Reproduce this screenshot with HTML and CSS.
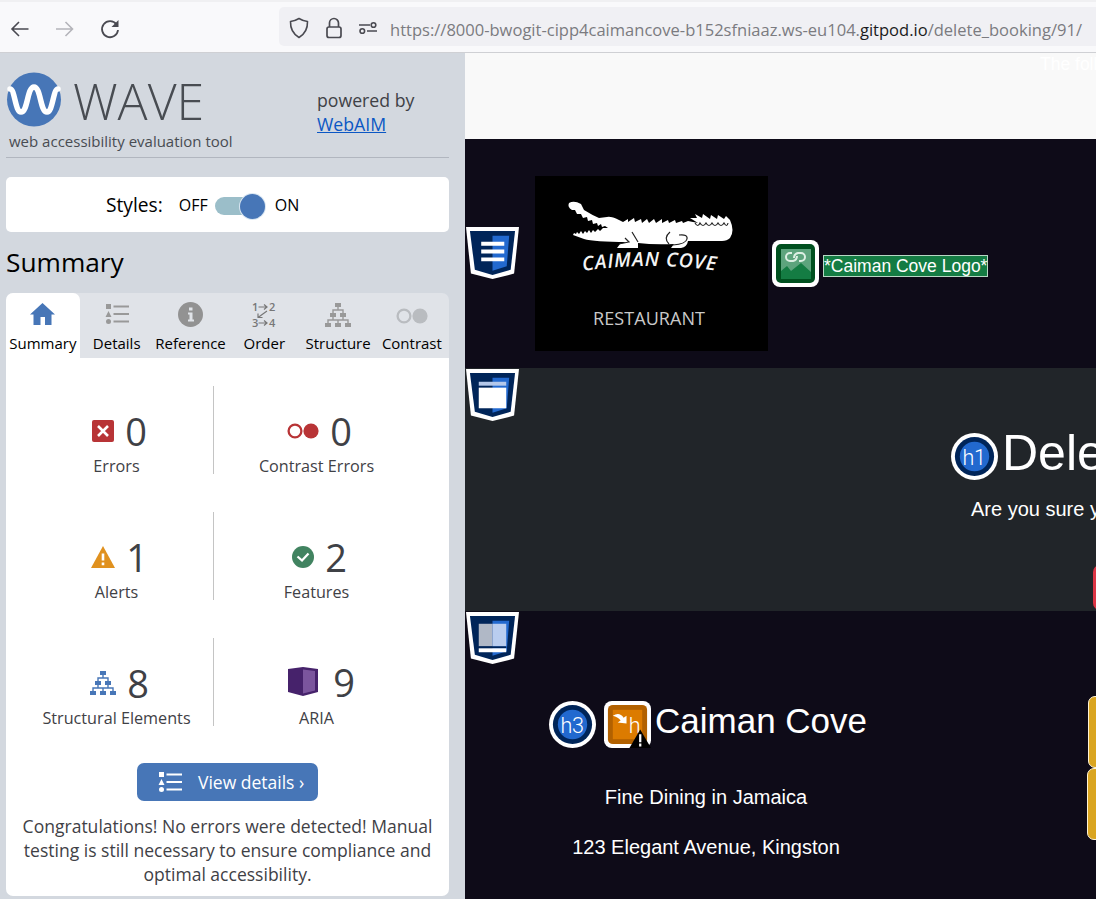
FILE: index.html
```html
<!DOCTYPE html>
<html lang="en">
<head>
<meta charset="utf-8">
<title>WAVE report - Caiman Cove</title>
<link rel="stylesheet" href="styles.css">
</head>
<body>
<svg width="0" height="0" class="defs">
  <symbol id="tree" viewBox="0 0 26 24">
    <path d="M10 0h6v4h-6zM5 10h6v4H5zM15 10h6v4h-6zM0 20h6v4H0zM10 20h6v4h-6zM20 20h6v4h-6z" fill="currentColor"/>
    <path d="M13 4v3M8 10V7h10v3M8 14v3M18 14v3M3 20v-3h20v3M13 17v3" fill="none" stroke="currentColor" stroke-width="1.4"/>
  </symbol>
  <symbol id="list" viewBox="0 0 24 20">
    <path d="M1 0h5v5H1zM3.500 7l3 6h-6z" fill="currentColor"/><circle cx="3.500" cy="17.500" r="2.500" fill="currentColor"/>
    <path d="M8.500 2.500H24M8.500 10H24M8.500 17.500H24" stroke="currentColor" stroke-width="2.200"/>
  </symbol>
  <symbol id="pair" viewBox="0 0 32 16">
    <circle cx="8" cy="8" r="6.400" fill="none" stroke="currentColor" stroke-width="2.300"/><circle cx="24" cy="8" r="7.600" fill="currentColor"/>
  </symbol>
  <symbol id="badge" viewBox="0 0 54 54">
    <path d="M0 0H54L49 47.500L27 53L5 47.500Z" fill="#fff"/><path d="M4 4H50L45.500 43.500L27 49L9 43.500Z" fill="#002559"/><path d="M27 9H44L41.500 40L27 44.500Z" fill="#2269cf"/>
  </symbol>
</svg>

<header class="toolbar">
  <nav class="nav">
    <svg width="20" height="18" viewBox="0 0 20 18" fill="none" stroke="#4a4a51" stroke-width="1.600"><path d="M18.500 9H2M9 2L2 9l7 7"/></svg>
    <svg width="20" height="18" viewBox="0 0 20 18" fill="none" stroke="#b4b4ba" stroke-width="1.600"><path d="M1 9h16.500M10.500 2l7 7-7 7"/></svg>
    <svg width="20" height="20" viewBox="0 0 20 20" fill="none" stroke="#4a4a51" stroke-width="1.800"><path d="M16.500 5.500A8 8 0 1 0 18 11"/><path d="M18.500 1v7h-7z" fill="#4a4a51" stroke="none"/></svg>
  </nav>
  <div class="address">
    <svg width="20" height="22" viewBox="0 0 20 22" fill="none" stroke="#4a4a51" stroke-width="1.600" stroke-linejoin="round"><path d="M10 1.500C7 3.300 4.200 4.200 1.500 4.500 1.300 11 3.200 16.500 10 20.500 16.800 16.500 18.700 11 18.500 4.500 15.800 4.200 13 3.300 10 1.500Z"/></svg>
    <svg width="16" height="22" viewBox="0 0 16 22" fill="none" stroke="#4a4a51" stroke-width="1.700"><rect x="1" y="10" width="14" height="10.500" rx="2"/><path d="M3.500 10V6a4.500 4.500 0 0 1 9 0v4"/></svg>
    <svg width="18" height="14" viewBox="0 0 18 14" fill="none" stroke="#4a4a51" stroke-width="1.600"><path d="M0 4h11M8 10h10"/><circle cx="14.500" cy="4" r="2.300"/><circle cx="3.300" cy="10" r="2.300"/></svg>
    <span class="url">https://8000-bwogit-cipp4caimancove-b152sfniaaz.ws-eu104.<b>gitpod.io</b>/delete_booking/91/</span>
  </div>
</header>

<main class="main">
  <aside class="sidebar">
    <div class="brand">
      <div class="brand-left">
        <div class="brand-row">
          <svg width="54" height="55" viewBox="0 0 54 55"><circle cx="27" cy="27.500" r="27" fill="#4776b7"/><path d="M3 17C8 17 8 40 14 40C21 40 20 15 27 15C34 15 33 40 40 40C46 40 46 17 51 17" fill="none" stroke="#fff" stroke-width="5.500" stroke-linecap="round"/></svg>
          <span class="wordmark">WAVE</span>
        </div>
        <div class="tagline">web accessibility evaluation tool</div>
      </div>
      <div class="powered">powered by<br><a href="#">WebAIM</a></div>
    </div>
    <div class="styles-box">
      <span class="styles-label">Styles:</span><span class="off">OFF</span><span class="switch"><i></i></span><span class="on">ON</span>
    </div>
    <h2>Summary</h2>
    <div class="tabs">
      <div class="tab active"><span class="ti"><svg width="25" height="22" viewBox="0 0 25 22"><path d="M12.500 0L25 11.500H21.500V22H15V14H10.500V22H3.500V11.500H0Z" fill="#4776b7"/></svg></span><span>Summary</span></div>
      <div class="tab"><span class="ti"><svg width="24" height="20"><use href="#list"/></svg></span><span>Details</span></div>
      <div class="tab"><span class="ti"><svg width="25" height="25" viewBox="0 0 25 25"><circle cx="12.500" cy="12.500" r="12.500" fill="#929292"/><path d="M11 5.500h3.500v3H11zM10 10.500h4.500v7H16v2h-6v-2h1.500v-5H10z" fill="#e0e3e8"/></svg></span><span>Reference</span></div>
      <div class="tab"><span class="ti order"><svg width="24" height="26" viewBox="0 0 24 26"><g fill="#777" class="order-num"><text x="0" y="9">1</text><text x="17" y="9">2</text><text x="0" y="25">3</text><text x="17" y="25">4</text></g><path d="M6.500 5h8M12 2.500l3 2.500L12 7.500M6.500 21h8M12 18.500l3 2.500-3 2.500M15 9L6 15.500M6 11.500v4h4.500" fill="none" stroke="#777" stroke-width="1.200"/></svg></span><span>Order</span></div>
      <div class="tab"><span class="ti"><svg width="26" height="24"><use href="#tree"/></svg></span><span>Structure</span></div>
      <div class="tab"><span class="ti pale"><svg width="32" height="16"><use href="#pair"/></svg></span><span>Contrast</span></div>
    </div>
    <section class="panel">
      <div class="stats">
        <div class="stat"><div class="count"><svg width="22" height="22" viewBox="0 0 22 22"><rect width="22" height="22" rx="2" fill="#b83436"/><path d="M6 6l10 10M16 6L6 16" stroke="#fff" stroke-width="2.600"/></svg><b>0</b></div><p>Errors</p></div>
        <div class="stat"><div class="count red"><svg width="32" height="16"><use href="#pair"/></svg><b>0</b></div><p>Contrast Errors</p></div>
        <div class="stat"><div class="count"><svg width="24" height="22" viewBox="0 0 24 22"><path d="M12 0l12 22H0z" fill="#e0911f"/><path d="M12 7.500v7M12 16.500v2.800" stroke="#fff" stroke-width="2.600"/></svg><b>1</b></div><p>Alerts</p></div>
        <div class="stat"><div class="count"><svg width="22" height="22" viewBox="0 0 22 22"><circle cx="11" cy="11" r="11" fill="#418360"/><path d="M5.500 10.500l4.500 4 6.500-7" fill="none" stroke="#fff" stroke-width="2.300"/></svg><b>2</b></div><p>Features</p></div>
        <div class="stat"><div class="count blue"><svg width="26" height="24"><use href="#tree"/></svg><b>8</b></div><p>Structural Elements</p></div>
        <div class="stat"><div class="count aria"><svg width="30" height="29" viewBox="0 0 30 29"><path d="M0 2L15 0L30 2V25L15 29L0 25Z" fill="#46226b"/><path d="M15 2.500L27 4V23.500L15 26.500Z" fill="#7b559d"/></svg><b>9</b></div><p>ARIA</p></div>
      </div>
      <button class="details"><svg width="24" height="20"><use href="#list"/></svg>View details ›</button>
      <p class="congrats"><span>Congratulations! No errors were detected! Manual</span><br><span>testing is still necessary to ensure compliance and</span><br><span>optimal accessibility.</span></p>
    </section>
  </aside>

  <div class="page">
    <div class="notice">The foll</div>
    <div class="site-head">
      <svg class="landmark" width="53" height="53" viewBox="0 0 54 54"><use href="#badge"/><path d="M15.500 15H39v4H15.500zM15.500 23H39v4H15.500zM15.500 31H39v4H15.500z" fill="#fff"/></svg>
      <svg class="logo" width="233" height="175" viewBox="0 0 233 175">
        <rect width="233" height="175" fill="#000"/>
        <path d="M34 27Q39 24 46 28L49 34Q57 39 64 42L72 41Q76 40 84 44L88 46 93 43 93 46 99 42 100 46 106 43 107 47 112 43 114 47 119 43 121 47 127 43 127 47 133 44 134 47 140 44 141 47 147 45 148 47 153 45 163 47 155 42 162 42 160 38 167 42 168 38 175 43 176 39 182 43 183 39 189 43 191 40 195 44Q200 55 195 62 192 65 187 65H153Q152 71 146 72H136L139 68Q119 69 103 67L103 72H82L85 68 92 66Q59 66 49 63L38 59 39 57 41 58 42 56 44 58 46 55 48 58 50 55 52 57 54 54 56 57 58 54 60 56 63 53 65 55 68 52 73 52 70 50 67 51 66 48 63 50 62 47 58 48 57 44 53 45 52 41 48 42 46 38 42 38 40 34 37 34Q32 31 34 27Z" fill="#fff"/>
        <path d="M97 56L103 66M90 62L94 66 84 68M135 56Q128 62 134 68M144 59Q153 58 152 63T138 69M160 47q3 5 5 0 3 5 6 0 3 5 6 0 3 5 6 0 3 5 6 0 3 5 4 0" fill="none" stroke="#222" stroke-width="1.200"/>
        <path id="arc" d="M48 95Q115 85 184 95" fill="none"/>
        <text class="logo-name" fill="#f4f4f4"><textPath href="#arc" textLength="133">CAIMAN COVE</textPath></text>
        <text class="logo-sub" x="58" y="149" textLength="112" fill="#c9c9c9">RESTAURANT</text>
      </svg>
      <svg class="alt-icon" width="47" height="47" viewBox="0 0 47 47"><rect width="47" height="47" rx="8" fill="#fff"/><rect x="4" y="4" width="39" height="39" rx="5" fill="#00501f"/><rect x="9" y="9" width="30" height="30" fill="#5da47d"/><path d="M9 31l6-5 4 5 10-8 10 9v7H9z" fill="#147c43"/><g fill="none" stroke="#dcefe3" stroke-width="2"><path d="M20 13h-2a4 4 0 0 0 0 8h3q4-1 4-5M27 21h2a4 4 0 0 0 0-8h-3q-4 1-4 5"/></g></svg>
      <span class="alt-text">*Caiman Cove Logo*</span>
    </div>
    <div class="confirm">
      <svg class="landmark" width="53" height="53" viewBox="0 0 54 54"><use href="#badge"/><path d="M13 13H41v4H13z" fill="#b4c8ea"/><path d="M13 19H41V40H13z" fill="#fff"/></svg>
      <div class="confirm-body">
        <div class="h1-row"><svg width="47" height="47" viewBox="0 0 48 48"><circle cx="24" cy="24" r="24" fill="#fff"/><circle cx="24" cy="24" r="20" fill="#002559"/><circle cx="24" cy="24" r="15" fill="#2269cf"/><text x="23.500" y="33" class="hnum" fill="#fff">h1</text></svg><h1>Delete Booking</h1></div>
        <p>Are you sure you want to delete this booking?</p>
        <div class="danger"></div>
      </div>
    </div>
    <footer class="footer">
      <svg class="landmark" width="53" height="53" viewBox="0 0 54 54"><use href="#badge"/><path d="M13 12H27V35H13z" fill="#b0b8c6"/><path d="M27 12H41V35H27z" fill="#b9cdef"/><path d="M13 35H41V37H13z" fill="#002559"/><path d="M13 37H41v4H13z" fill="#fff"/></svg>
      <div class="contact">
        <div class="h3-row">
          <svg width="47" height="47" viewBox="0 0 48 48"><circle cx="24" cy="24" r="24" fill="#fff"/><circle cx="24" cy="24" r="20" fill="#002559"/><circle cx="24" cy="24" r="15" fill="#2269cf"/><text x="23.500" y="33" class="hnum" fill="#fff">h3</text></svg>
          <svg width="47" height="47" viewBox="0 0 48 48"><rect width="48" height="48" rx="8" fill="#fff"/><rect x="4" y="4" width="40" height="40" rx="5" fill="#b26100"/><rect x="9" y="9" width="30" height="30" fill="#dc7b00"/><path d="M9 15Q16 11 20 17L23 15V23L14 22L17 20Q14 16 9 15Z" fill="#fff"/><text x="31" y="33" class="hnum" fill="#fff">h</text><path d="M37 29l11 19H26z" fill="#000"/><path d="M37 34v8M37 43.500v3" stroke="#fff" stroke-width="2.300"/></svg>
          <h3>Caiman Cove</h3>
        </div>
        <p class="line1">Fine Dining in Jamaica</p>
        <p class="line2">123 Elegant Avenue, Kingston</p>
      </div>
      <div class="gold"><i></i><i></i></div>
    </footer>
  </div>
</main>
</body>
</html>
```
FILE: styles.css
```css
* { box-sizing: border-box; }
body { margin: 0; width: 1096px; height: 899px; overflow: hidden; font-family: "Open Sans", sans-serif; color: #3f4146; }
h1, h2, h3, p { margin: 0; font-weight: 400; }
svg { display: block; flex: none; overflow: visible; }
.defs { position: absolute; }

.toolbar { height: 53px; display: flex; background: #f9f9fb; border-top: 2px solid #f0f0f2; border-bottom: 1px solid #cfd0d4; }
.nav { width: 279px; flex: none; padding: 3px 0 0 10px; display: flex; align-items: center; gap: 25px; }
.address { flex: 1; min-width: 0; height: 39px; margin-top: 5px; padding: 2px 0 0 10px; display: flex; align-items: center; background: #f0f0f4; border-radius: 5px 0 0 5px; }
.address svg + svg { margin-left: 17px; }
.url { margin: 3px 0 0 13px; font-size: 16.540px; color: #7b7b80; white-space: nowrap; }
.url b { font-weight: 400; color: #1b1b20; }

.main { display: flex; height: 846px; }
.sidebar { width: 465px; flex: none; padding: 0 16px 0 6px; background: #d3d8df; }
.brand { height: 105px; padding-top: 19px; display: flex; border-bottom: 1px solid #b1b6bf; }
.brand-left { width: 310px; }
.brand-row { height: 56px; display: flex; gap: 12px; align-items: flex-start; margin-left: 1px; }
.wordmark { font-size: 50px; font-weight: 300; line-height: 58px; color: #484c52; }
.tagline { margin-left: 3px; font-size: 15px; line-height: 26px; color: #484c52; white-space: nowrap; }
.powered { padding: 16px 0 0 1px; font-size: 17.700px; line-height: 24px; white-space: nowrap; }
.powered a { color: #0b57c4; }
.styles-box { height: 55px; margin-top: 19px; padding-left: 100px; display: flex; align-items: center; background: #fff; border-radius: 5px; color: #000; font-size: 19.200px; }
.off, .on { font-size: 16px; }
.off { margin-left: 16px; }
.switch { width: 50px; height: 18px; margin: 3px 10px 0 7px; border-radius: 9px; background: #9bbec9; display: flex; justify-content: flex-end; align-items: center; }
.switch i { width: 25px; height: 25px; flex: none; border-radius: 50%; background: #4776b7; box-shadow: 0 0 0 1px #d9e6f2; }
h2 { height: 61px; line-height: 61px; font-size: 26.300px; color: #000; }
.tabs { height: 65px; display: flex; background: #e0e3e8; border-radius: 7px 7px 0 0; }
.tab { width: 73.800px; display: flex; flex-direction: column; align-items: center; font-size: 15px; line-height: 24px; color: #000; border-radius: 7px 7px 0 0; white-space: nowrap; }
.tab.active { background: #fff; }
.ti { height: 38px; padding-top: 5px; display: flex; align-items: center; justify-content: center; color: #999; }
.tab.active .ti, .tab:nth-child(2) .ti { padding-top: 3px; }
.ti.pale { padding-top: 7px; color: #b9bcc0; }
.order-num { font: 600 11px "Open Sans", sans-serif; }
.panel { height: 538px; padding-top: 28px; background: #fff; border-radius: 0 0 7px 7px; display: flex; flex-direction: column; align-items: center; }
.stats { width: 100%; padding: 0 30px 0 14px; display: grid; grid-template-columns: 194px 205px; grid-auto-rows: 88px; row-gap: 38px; }
.stat { padding-top: 22px; display: flex; flex-direction: column; align-items: center; }
.stat:nth-child(odd) { border-right: 1px solid #c4c4c4; }
.count { height: 46px; padding: 0 0 1px 6px; display: flex; align-items: center; gap: 11px; }
.count b { font-size: 38px; font-weight: 400; line-height: 46px; }
.count.aria { padding: 0 0 3px 10px; gap: 15px; }
.count.red { color: #b83436; }
.count.blue svg { color: #4776b7; }
.count.red b { color: #3f4146; }
.stat p { font-size: 16.200px; line-height: 25px; white-space: nowrap; }
.details { width: 181px; height: 38px; margin-top: 37px; padding: 0 0 1px 21px; display: flex; align-items: center; gap: 16px; border: 0; border-radius: 7px; background: #4776b7; color: #fff; font: 17.500px "Open Sans", sans-serif; white-space: nowrap; }
.congrats { margin-top: 13px; font-size: 17.550px; line-height: 24px; text-align: center; white-space: nowrap; }

.page { flex: 1; width: 631px; min-width: 0; overflow: hidden; background: #0e0b18; color: #fff; font-family: "Liberation Sans", Arial, sans-serif; }
.notice { height: 86px; padding: 1px 0 0 575px; background: #f9f9f9; font-size: 17.500px; line-height: 20px; white-space: nowrap; }
.landmark { margin: 1px 0 0 1px; }
.site-head { height: 229px; display: flex; align-items: center; }
.site-head .landmark { margin-top: 0; margin-bottom: 1px; }
.logo { margin: 20px 0 0 16px; }
.logo-name { font: italic 600 19.500px "Open Sans", sans-serif; }
.logo-sub { font: 18px "Open Sans", sans-serif; }
.alt-icon { margin: 19px 0 0 4px; }
.alt-text { margin: 25px 0 0 4px; height: 22px; border: 1px solid #b7d8c4; background: #147c43; font-size: 17.500px; line-height: 20px; white-space: nowrap; }
.confirm { height: 243px; display: flex; align-items: flex-start; background: #212529; }
.confirm-body { width: 577px; padding: 57px 0 0 432px; }
.h1-row { display: flex; height: 60px; gap: 4px; align-items: center; white-space: nowrap; }
.h1-row svg { margin-top: 2px; }
h1 { margin-top: -4px; font-size: 50px; line-height: 56px; }
.confirm p { margin: 12px 0 0 20px; font-size: 20px; line-height: 24px; white-space: nowrap; }
.danger { width: 90px; height: 45px; margin: 44px 0 0 142px; background: #dc3545; border-radius: 7px; }
.hnum { font: 300 22px Roboto, sans-serif; letter-spacing: -0.500px; text-anchor: middle; }
.footer { height: 288px; display: flex; align-items: flex-start; }
.contact { width: 569px; flex: none; padding: 86px 0 0 30px; }
.h3-row { display: flex; align-items: center; height: 54px; gap: 8px; }
h3 { margin: -6px 0 0 -4px; font-size: 35px; line-height: 42px; white-space: nowrap; }
.contact p { width: 314px; font-size: 20px; line-height: 24px; text-align: center; white-space: nowrap; }
.line1 { margin-top: 34px; }
.line2 { margin-top: 26px; }
.gold { width: 60px; margin-top: 85px; flex: none; }
.gold i { display: block; width: 60px; height: 72px; border-radius: 7px; background: #daa520; border: 1px solid #fff4d5; }
.gold i + i { margin-left: -1px; }
```
